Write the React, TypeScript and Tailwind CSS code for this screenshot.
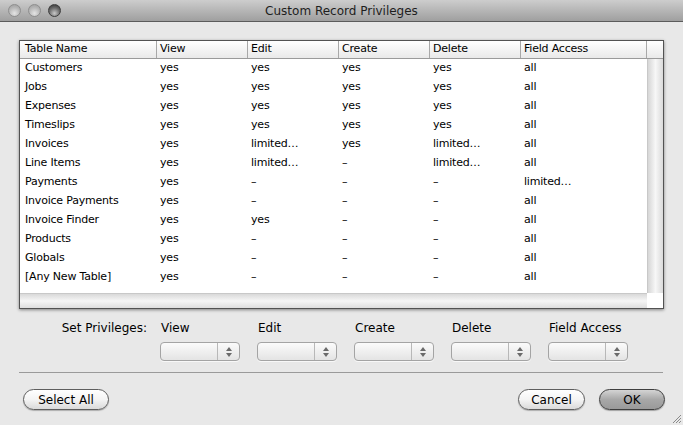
import React from "react";

const rows = [
  ["Customers", "yes", "yes", "yes", "yes", "all"],
  ["Jobs", "yes", "yes", "yes", "yes", "all"],
  ["Expenses", "yes", "yes", "yes", "yes", "all"],
  ["Timeslips", "yes", "yes", "yes", "yes", "all"],
  ["Invoices", "yes", "limited…", "yes", "limited…", "all"],
  ["Line Items", "yes", "limited…", "–", "limited…", "all"],
  ["Payments", "yes", "–", "–", "–", "limited…"],
  ["Invoice Payments", "yes", "–", "–", "–", "all"],
  ["Invoice Finder", "yes", "yes", "–", "–", "all"],
  ["Products", "yes", "–", "–", "–", "all"],
  ["Globals", "yes", "–", "–", "–", "all"],
  ["[Any New Table]", "yes", "–", "–", "–", "all"],
];

const headers = ["Table Name", "View", "Edit", "Create", "Delete", "Field Access"];
const widths = ["w-[137px]", "w-[91px]", "w-[91px]", "w-[91px]", "w-[91px]", "w-[126px]"];

function Light({ dark }: { dark?: boolean }) {
  return (
    <div
      className={
        dark
          ? "h-[13px] w-[13px] rounded-full border border-[#3c3c3c] bg-[radial-gradient(circle_at_50%_75%,#c8c8c8_0%,#6a6a6a_55%,#2e2e2e_100%)]"
          : "h-[13px] w-[13px] rounded-full border border-[#8e8e8e] bg-[radial-gradient(circle_at_50%_75%,#e4e4e4_0%,#b4b4b4_60%,#9a9a9a_100%)]"
      }
    />
  );
}

function Popup() {
  return (
    <div className="flex h-[19px] w-[80px] rounded-[4px] border border-[#a4a4a4] bg-gradient-to-b from-[#fbfbfb] to-[#e4e4e4] shadow-[0_1px_0_rgba(255,255,255,0.7)]">
      <div className="flex-1" />
      <div className="flex w-[22px] flex-col items-center justify-center gap-[2px] border-l border-[#b8b8b8] text-[#6a6a6a]">
        <svg width="6" height="4" viewBox="0 0 6 4">
          <path d="M3 0 L6 4 L0 4 Z" fill="currentColor" />
        </svg>
        <svg width="6" height="4" viewBox="0 0 6 4">
          <path d="M0 0 L6 0 L3 4 Z" fill="currentColor" />
        </svg>
      </div>
    </div>
  );
}

export default function App() {
  return (
    <div
      className="relative h-[425px] w-[683px] overflow-hidden bg-[#e8e8e8] text-black"
      style={{ fontFamily: '"DejaVu Sans", "Liberation Sans", sans-serif' }}
    >
      {/* Title bar */}
      <div className="flex h-[22px] items-center border-b border-[#5c5c5c] bg-gradient-to-b from-[#cdcdcd] to-[#9f9f9f]">
        <div className="flex w-[80px] items-center gap-[7px] pl-[8px]">
          <Light />
          <Light />
          <Light dark />
        </div>
        <div className="flex-1 text-center text-[12px] text-[#1e1e1e]">Custom Record Privileges</div>
        <div className="w-[80px]" />
      </div>

      {/* Table */}
      <div className="ml-[19px] mt-[18px] flex h-[269px] w-[645px] flex-col border border-[#525252] bg-white shadow-[0_1px_3px_rgba(0,0,0,0.45)]">
        <div className="flex h-[18px] shrink-0 border-b border-[#9a9a9a] bg-gradient-to-b from-[#ffffff] to-[#e9e9e9] text-[11px] tracking-[-0.2px]">
          {headers.map((h, i) => (
            <div
              key={h}
              className={`${widths[i]} flex items-center border-r border-[#a8a8a8] ${i === 0 ? "pl-[5px]" : "pl-[3px]"}`}
            >
              {h}
            </div>
          ))}
          <div className="flex-1" />
        </div>
        <div className="flex flex-1">
          <div className="w-[627px] pt-[0px] text-[11px] tracking-[-0.2px]">
            {rows.map((r) => (
              <div key={r[0]} className="flex h-[19px] items-center">
                {r.map((c, i) => (
                  <div key={i} className={`${widths[i]} ${i === 0 ? "pl-[5px]" : "pl-[3px]"}`}>
                    {c}
                  </div>
                ))}
              </div>
            ))}
          </div>
          <div className="flex-1 border-l border-[#c8c8c8] bg-gradient-to-r from-[#d6d6d6] via-[#f7f7f7] to-[#dadada]" />
        </div>
        <div className="flex h-[15px] shrink-0">
          <div className="w-[627px] border-t border-[#c8c8c8] bg-gradient-to-b from-[#d9d9d9] via-[#f6f6f6] to-[#dedede]" />
          <div className="flex-1 bg-white" />
        </div>
      </div>

      {/* Set privileges */}
      <div className="mt-[11px] flex">
        <div className="w-[160px] pr-[13px] text-right text-[12px] leading-[16px]">Set Privileges:</div>
        {["View", "Edit", "Create", "Delete", "Field Access"].map((l) => (
          <div key={l} className="flex w-[97px] flex-col">
            <div className="pl-[1px] text-[12px] leading-[16px]">{l}</div>
            <div className="mt-[6px]">
              <Popup />
            </div>
          </div>
        ))}
      </div>

      <div className="ml-[19px] mt-[11px] h-px w-[644px] bg-[#9a9a9a]" />

      {/* Buttons */}
      <div className="mt-[16px] flex items-center px-[23px] text-[12px]">
        <button className="flex h-[21px] w-[86px] items-center justify-center rounded-full border border-[#5e5e5e] bg-gradient-to-b from-[#ffffff] via-[#f4f4f4] to-[#dadada] shadow-[0_1px_1px_rgba(0,0,0,0.25)]">
          Select All
        </button>
        <div className="flex-1" />
        <button className="flex h-[21px] w-[67px] items-center justify-center rounded-full border border-[#5e5e5e] bg-gradient-to-b from-[#ffffff] via-[#f4f4f4] to-[#dadada] shadow-[0_1px_1px_rgba(0,0,0,0.25)]">
          Cancel
        </button>
        <button className="ml-[14px] mr-[-5px] flex h-[21px] w-[66px] items-center justify-center rounded-full border border-[#3e3e3e] bg-gradient-to-b from-[#d4d4d4] via-[#a8a8a8] to-[#9a9a9a] shadow-[0_1px_1px_rgba(0,0,0,0.3)]">
          OK
        </button>
      </div>

      {/* Resize grip */}
      <svg className="absolute bottom-[1px] right-[1px]" width="12" height="12" viewBox="0 0 12 12">
        <path d="M11 3 L3 11 M11 6 L6 11 M11 9 L9 11" stroke="#8a8a8a" strokeWidth="1" />
      </svg>
    </div>
  );
}
